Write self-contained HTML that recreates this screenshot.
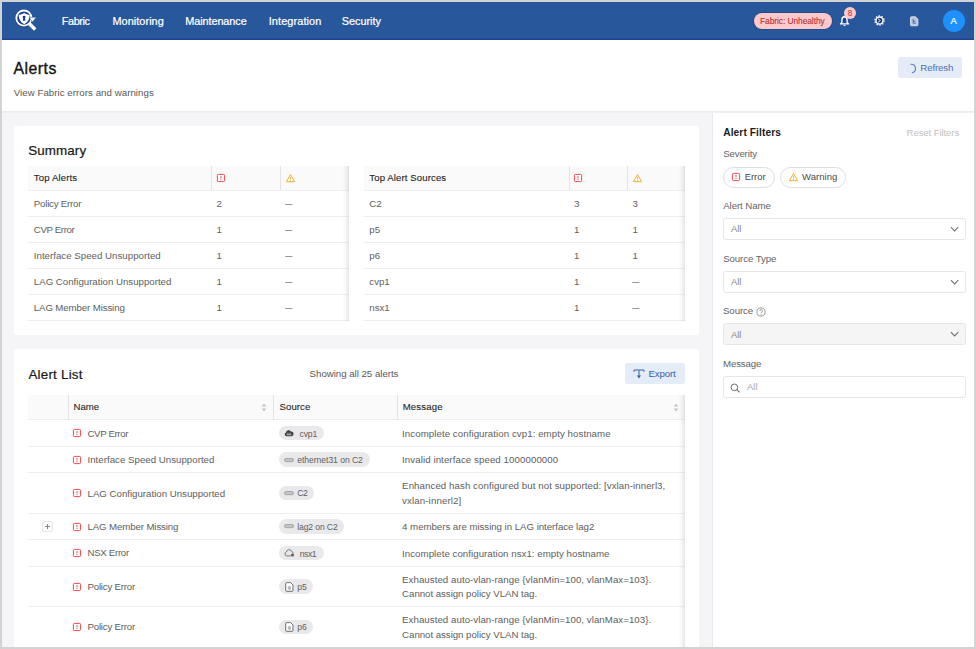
<!DOCTYPE html>
<html lang="en">
<head>
<meta charset="utf-8">
<title>Alerts</title>
<style>
*{box-sizing:border-box;margin:0;padding:0}
html,body{width:976px;height:649px;overflow:hidden;background:#d3d3d3}
body{font-family:"Liberation Sans",sans-serif;font-size:9.75px;color:#595959;position:relative}
#frame{position:absolute;left:2px;top:2px;width:972px;height:645px;background:#f5f5f7;overflow:hidden}
#pg{position:absolute;left:-2px;top:-2px;width:976px;height:649px}
.t{position:absolute;white-space:nowrap}
.ic{position:absolute;display:block;overflow:visible}
.bx{position:absolute}
.md{-webkit-text-stroke:.22px currentColor}
.h1{-webkit-text-stroke:.36px currentColor}
.lt{-webkit-text-stroke:.1px currentColor}
.sb{-webkit-text-stroke:.45px currentColor}
.hl{position:absolute;height:1px;background:#efeff1}
.vl{position:absolute;width:1px;background:#e3e3e7}
.tag{position:absolute;height:14.5px;border-radius:8px;background:#e9e9eb}
.sel{position:absolute;left:723px;width:243px;height:22px;border:1px solid #e6e6e8;border-radius:2.5px;background:#fff}
.chip{position:absolute;height:21px;border:1px solid #dedee0;border-radius:11px;background:#fff}
</style>
</head>
<body>
<div id="frame"><div id="pg">

<div class="bx" style="left:2px;top:2px;width:972px;height:38px;background:#28579c"></div>
<div class="bx" style="left:2px;top:38px;width:972px;height:1px;background:#224d97"></div>
<div class="bx" style="left:2px;top:39px;width:972px;height:1px;background:#1a4090"></div>
<svg class="ic" style="left:12px;top:6px" width="28" height="28" viewBox="0 0 28 28">
<circle cx="11.9" cy="12.1" r="8.9" fill="none" stroke="#1f4797" stroke-width=".9"/>
<circle cx="11.9" cy="12.1" r="7.6" fill="#1d4193" stroke="#fff" stroke-width="1.8"/>
<path d="M17.2 17.5 L23.2 23.5" stroke="#fff" stroke-width="3.3" stroke-linecap="butt"/>
<path d="M12.2 6.9 C14 8.1 15.8 8.6 17.7 8.7 C17.8 12.8 16 16.2 12.2 18.3 C8.4 16.2 6.6 12.8 6.7 8.7 C8.6 8.6 10.4 8.1 12.2 6.9 Z" fill="#fff"/>
<circle cx="12.1" cy="11.1" r="1.45" fill="#1b3a8c"/>
<path d="M11.35 11.6 h1.5 l0.55 3.1 h-2.6 z" fill="#1b3a8c"/>
<path d="M17.1 11.3 H24.2 L20.6 16 Z" fill="#fff" stroke="#24509a" stroke-width=".5" stroke-linejoin="round"/>
</svg>
<div class="t md" style="left:61.70px;top:13.22px;font-size:10.9px;line-height:16px;color:#fff;letter-spacing:-0.382px;">Fabric</div>
<div class="t md" style="left:112.50px;top:13.22px;font-size:10.9px;line-height:16px;color:#fff;letter-spacing:0.045px;">Monitoring</div>
<div class="t md" style="left:185.20px;top:13.22px;font-size:10.9px;line-height:16px;color:#fff;letter-spacing:-0.080px;">Maintenance</div>
<div class="t md" style="left:268.70px;top:13.22px;font-size:10.9px;line-height:16px;color:#fff;letter-spacing:0.119px;">Integration</div>
<div class="t md" style="left:341.80px;top:13.22px;font-size:10.9px;line-height:16px;color:#fff;letter-spacing:-0.042px;">Security</div>
<div class="bx" style="left:754px;top:13px;width:77.5px;height:15.5px;border-radius:8px;background:#ffc9c9;box-shadow:0 0 0 1px #204a92"></div>
<div class="t lt" style="left:760.00px;top:15.19px;font-size:8.4px;line-height:12px;color:#b0303a;letter-spacing:-0.059px;">Fabric: Unhealthy</div>
<svg class="ic" style="left:839.4px;top:15px" width="11" height="12" viewBox="0 0 11 12">
<path d="M5.5 1.7 C3.6 1.7 2.9 3.2 2.9 5 V7.4 L1.5 8.9 H9.5 L8.1 7.4 V5 C8.1 3.2 7.4 1.7 5.5 1.7 Z" fill="#1f4697" stroke="#fff" stroke-width="1.35" stroke-linejoin="round"/>
<path d="M4.4 10.1 a1.1 1.1 0 0 0 2.2 0 z" fill="#fff"/><path d="M5.5 .7v1" stroke="#fff" stroke-width="1.1"/>
</svg>
<div class="bx" style="left:843.5px;top:6.7px;width:12.8px;height:12.8px;border-radius:50%;background:#ffc9c9"></div>
<div class="t" style="left:847.70px;top:8.16px;font-size:8.2px;line-height:12px;color:#b5343c;">8</div>
<svg class="ic" style="left:874.3px;top:15.3px" width="11" height="11" viewBox="0 0 12 12">
<circle cx="6" cy="6" r="5.1" fill="none" stroke="#fff" stroke-width="1.3" stroke-dasharray="1.5 1.7"/>
<circle cx="6" cy="6" r="3.85" fill="#1b3a8c" stroke="#fff" stroke-width="1.55"/>
<path d="M4.4 4.1 L6.9 6 L4.4 7.9" fill="none" stroke="#fff" stroke-width=".9" stroke-linejoin="round"/>
</svg>
<svg class="ic" style="left:909.6px;top:15.6px" width="8.8" height="10.6" viewBox="0 0 10 12">
<path d="M1.6 .8 H6.2 L9 3.6 V10 a1.1 1.1 0 0 1 -1.1 1.1 H1.6 a1.1 1.1 0 0 1 -1.1 -1.1 V1.9 a1.1 1.1 0 0 1 1.1 -1.1 Z" fill="#bcc8df" stroke="#dfe5f0" stroke-width=".9"/>
<path d="M3.6 3.2 V8.2 H6.8 M3.6 5.8 H6.4" fill="none" stroke="#28579c" stroke-width=".9"/>
</svg>
<div class="bx" style="left:942.7px;top:9.7px;width:22px;height:22px;border-radius:50%;background:#1e90ff"></div>
<div class="t md" style="left:950.50px;top:14.74px;font-size:9.4px;line-height:12px;color:#fff;">A</div>
<div class="bx" style="left:2px;top:40px;width:972px;height:71px;background:#fff"></div>
<div class="bx" style="left:2px;top:111px;width:972px;height:1px;background:#ececef"></div>
<div class="bx" style="left:2px;top:112px;width:972px;height:1px;background:#efeff2"></div>
<div class="t h1" style="left:13.40px;top:57.93px;font-size:15.8px;line-height:22px;color:#141414;letter-spacing:0.504px;">Alerts</div>
<div class="t" style="left:13.70px;top:85.94px;font-size:9.7px;line-height:14px;color:#595959;letter-spacing:0.044px;">View Fabric errors and warnings</div>
<div class="bx" style="left:897.7px;top:56.8px;width:64px;height:21px;border-radius:2.5px;background:#e6ecf7"></div>
<svg class="ic" style="left:905.7px;top:62.6px" width="11" height="11" viewBox="0 0 11 11">
<circle cx="5.5" cy="5.5" r="4.3" fill="none" stroke="#e0e7f4" stroke-width="1"/>
<path d="M5 1.25 A4.3 4.3 0 0 1 6.3 9.7" fill="none" stroke="#5a7cc0" stroke-width="1.1" stroke-linecap="round"/>
</svg>
<div class="t" style="left:920.30px;top:61.24px;font-size:9.7px;line-height:14px;color:#4b70b6;letter-spacing:-0.139px;">Refresh</div>
<div class="bx" style="left:713px;top:113px;width:261px;height:536px;background:#fff"></div>
<div class="bx" style="left:712px;top:113px;width:1px;height:536px;background:#e9e9ec"></div>
<div class="t" style="left:723.20px;top:125.57px;font-size:10.2px;line-height:14px;color:#1c1c1c;font-weight:bold;letter-spacing:0.096px;">Alert Filters</div>
<div class="t" style="left:906.60px;top:125.57px;font-size:9.6px;line-height:14px;color:#c2c2c2;letter-spacing:-0.104px;">Reset Filters</div>
<div class="t" style="left:723.20px;top:146.64px;font-size:9.7px;line-height:14px;color:#636363;letter-spacing:-0.164px;">Severity</div>
<div class="chip" style="left:722.8px;top:166.5px;width:52px"></div>
<svg class="ic" width="10" height="10" viewBox="0 0 10 10" style="left:730.80px;top:171.90px"><rect x="1.4" y="1.4" width="7.2" height="7.2" rx="1.15" fill="#fff" stroke="#f2464b" stroke-width="1"/><path d="M5 3.1v2.3" stroke="#f2464b" stroke-width="1" stroke-linecap="butt"/><rect x="4.5" y="6.1" width="1" height="1" fill="#f2464b"/></svg>
<div class="t" style="left:744.70px;top:170.01px;font-size:9.5px;line-height:14px;color:#4a4a4a;letter-spacing:-0.062px;">Error</div>
<div class="chip" style="left:780.1px;top:166.5px;width:66px"></div>
<svg class="ic" width="11" height="10" viewBox="0 0 11 10" style="left:787.80px;top:172.10px"><path d="M5.5 1.6 L9.6 8.7 H1.4 Z" fill="none" stroke="#f2b233" stroke-width="1" stroke-linejoin="round"/><path d="M5.5 4.2v2.2" stroke="#f2b233" stroke-width=".9"/><rect x="5.05" y="7" width=".9" height=".9" fill="#f2b233"/></svg>
<div class="t" style="left:802.10px;top:170.01px;font-size:9.5px;line-height:14px;color:#4a4a4a;letter-spacing:0.044px;">Warning</div>
<div class="t" style="left:723.20px;top:199.24px;font-size:9.7px;line-height:14px;color:#636363;letter-spacing:-0.085px;">Alert Name</div>
<div class="sel" style="top:218px"></div>
<div class="t" style="left:730.90px;top:222.31px;font-size:9.5px;line-height:14px;color:#8a8a8a;letter-spacing:-0.074px;">All</div>
<svg class="ic" style="left:949.7px;top:225.9px" width="9.2" height="6.4" viewBox="0 0 10 7"><path d="M1 1.3 L5 5.4 L9 1.3" fill="none" stroke="#6e6e6e" stroke-width="1.1"/></svg>
<div class="t" style="left:723.20px;top:251.74px;font-size:9.7px;line-height:14px;color:#636363;letter-spacing:-0.100px;">Source Type</div>
<div class="sel" style="top:271px"></div>
<div class="t" style="left:730.90px;top:274.71px;font-size:9.5px;line-height:14px;color:#8a8a8a;letter-spacing:-0.074px;">All</div>
<svg class="ic" style="left:949.7px;top:278.6px" width="9.2" height="6.4" viewBox="0 0 10 7"><path d="M1 1.3 L5 5.4 L9 1.3" fill="none" stroke="#6e6e6e" stroke-width="1.1"/></svg>
<div class="t" style="left:723.00px;top:304.24px;font-size:9.7px;line-height:14px;color:#636363;letter-spacing:-0.101px;">Source</div>
<svg class="ic" style="left:755.6px;top:306.5px" width="10" height="10" viewBox="0 0 10 10">
<circle cx="5" cy="5" r="4.1" fill="none" stroke="#8a8a8a" stroke-width=".85"/>
<path d="M3.7 4 a1.35 1.35 0 1 1 1.9 1.2 c-.4 .2 -.55 .45 -.55 .9" fill="none" stroke="#8a8a8a" stroke-width=".85"/><rect x="4.55" y="6.9" width=".9" height=".9" fill="#8a8a8a"/>
</svg>
<div class="sel" style="top:323px;background:#f5f5f5"></div>
<div class="t" style="left:730.90px;top:327.51px;font-size:9.5px;line-height:14px;color:#8a8a8a;letter-spacing:-0.074px;">All</div>
<svg class="ic" style="left:949.7px;top:331.1px" width="9.2" height="6.4" viewBox="0 0 10 7"><path d="M1 1.3 L5 5.4 L9 1.3" fill="none" stroke="#6e6e6e" stroke-width="1.1"/></svg>
<div class="t" style="left:723.00px;top:356.94px;font-size:9.7px;line-height:14px;color:#636363;letter-spacing:-0.153px;">Message</div>
<div class="sel" style="top:376px"></div>
<svg class="ic" style="left:730.2px;top:382.8px" width="11" height="10" viewBox="0 0 11 10">
<circle cx="4.4" cy="4.3" r="3.3" fill="none" stroke="#6b6b6b" stroke-width="1"/><path d="M6.8 6.7 L9.6 9.4" stroke="#6b6b6b" stroke-width="1.1"/>
</svg>
<div class="t" style="left:747.10px;top:379.91px;font-size:9.5px;line-height:14px;color:#a8a8a8;letter-spacing:-0.074px;">All</div>
<div class="bx" style="left:14px;top:126px;width:685px;height:209px;border-radius:3px;background:#fff"></div>
<div class="t md" style="left:28.20px;top:141.96px;font-size:13.4px;line-height:18px;color:#1a1a1a;letter-spacing:0.101px;">Summary</div>
<div class="bx" style="left:28px;top:166px;width:321px;height:25px;background:#fafafa;border-radius:2px 2px 0 0"></div>
<div class="hl" style="left:28px;top:190px;width:321px"></div>
<div class="hl" style="left:28px;top:216px;width:321px"></div>
<div class="hl" style="left:28px;top:242px;width:321px"></div>
<div class="hl" style="left:28px;top:268px;width:321px"></div>
<div class="hl" style="left:28px;top:294px;width:321px"></div>
<div class="hl" style="left:28px;top:320px;width:321px"></div>
<div class="vl" style="left:211px;top:166px;height:24px"></div>
<div class="vl" style="left:280px;top:166px;height:24px"></div>
<div class="t lt" style="left:33.80px;top:170.97px;font-size:9.6px;line-height:14px;color:#262626;letter-spacing:0.138px;">Top Alerts</div>
<svg class="ic" width="10" height="10" viewBox="0 0 10 10" style="left:215.60px;top:173.10px"><rect x="1.4" y="1.4" width="7.2" height="7.2" rx="1.15" fill="#fff" stroke="#f2464b" stroke-width="1"/><path d="M5 3.1v2.3" stroke="#f2464b" stroke-width="1" stroke-linecap="butt"/><rect x="4.5" y="6.1" width="1" height="1" fill="#f2464b"/></svg>
<svg class="ic" width="11" height="10" viewBox="0 0 11 10" style="left:284.70px;top:173.30px"><path d="M5.5 1.6 L9.6 8.7 H1.4 Z" fill="none" stroke="#f2b233" stroke-width="1" stroke-linejoin="round"/><path d="M5.5 4.2v2.2" stroke="#f2b233" stroke-width=".9"/><rect x="5.05" y="7" width=".9" height=".9" fill="#f2b233"/></svg>
<div class="t" style="left:33.80px;top:196.44px;font-size:9.7px;line-height:15px;color:#5e5e5e;letter-spacing:-0.212px;">Policy Error</div>
<div class="t" style="left:216.60px;top:196.44px;font-size:9.7px;line-height:15px;color:#5e5e5e;">2</div>
<div class="t" style="left:285.40px;top:196.44px;font-size:9.7px;line-height:15px;color:#6a6a6a;transform:scaleX(.76);transform-origin:0 50%;">—</div>
<div class="t" style="left:33.80px;top:222.44px;font-size:9.7px;line-height:15px;color:#5e5e5e;letter-spacing:-0.376px;">CVP Error</div>
<div class="t" style="left:216.60px;top:222.44px;font-size:9.7px;line-height:15px;color:#5e5e5e;">1</div>
<div class="t" style="left:285.40px;top:222.44px;font-size:9.7px;line-height:15px;color:#6a6a6a;transform:scaleX(.76);transform-origin:0 50%;">—</div>
<div class="t" style="left:33.80px;top:248.44px;font-size:9.7px;line-height:15px;color:#5e5e5e;letter-spacing:0.013px;">Interface Speed Unsupported</div>
<div class="t" style="left:216.60px;top:248.44px;font-size:9.7px;line-height:15px;color:#5e5e5e;">1</div>
<div class="t" style="left:285.40px;top:248.44px;font-size:9.7px;line-height:15px;color:#6a6a6a;transform:scaleX(.76);transform-origin:0 50%;">—</div>
<div class="t" style="left:33.80px;top:274.44px;font-size:9.7px;line-height:15px;color:#5e5e5e;letter-spacing:-0.010px;">LAG Configuration Unsupported</div>
<div class="t" style="left:216.60px;top:274.44px;font-size:9.7px;line-height:15px;color:#5e5e5e;">1</div>
<div class="t" style="left:285.40px;top:274.44px;font-size:9.7px;line-height:15px;color:#6a6a6a;transform:scaleX(.76);transform-origin:0 50%;">—</div>
<div class="t" style="left:33.80px;top:300.44px;font-size:9.7px;line-height:15px;color:#5e5e5e;letter-spacing:-0.126px;">LAG Member Missing</div>
<div class="t" style="left:216.60px;top:300.44px;font-size:9.7px;line-height:15px;color:#5e5e5e;">1</div>
<div class="t" style="left:285.40px;top:300.44px;font-size:9.7px;line-height:15px;color:#6a6a6a;transform:scaleX(.76);transform-origin:0 50%;">—</div>
<div class="bx" style="left:342px;top:166px;width:7px;height:155px;background:linear-gradient(to right,rgba(0,0,0,0),rgba(0,0,0,.025) 45%,rgba(0,0,0,.10))"></div>
<div class="bx" style="left:363.5px;top:166px;width:321.0px;height:25px;background:#fafafa;border-radius:2px 2px 0 0"></div>
<div class="hl" style="left:363.5px;top:190px;width:321.0px"></div>
<div class="hl" style="left:363.5px;top:216px;width:321.0px"></div>
<div class="hl" style="left:363.5px;top:242px;width:321.0px"></div>
<div class="hl" style="left:363.5px;top:268px;width:321.0px"></div>
<div class="hl" style="left:363.5px;top:294px;width:321.0px"></div>
<div class="hl" style="left:363.5px;top:320px;width:321.0px"></div>
<div class="vl" style="left:568.5px;top:166px;height:24px"></div>
<div class="vl" style="left:627px;top:166px;height:24px"></div>
<div class="t lt" style="left:369.30px;top:170.97px;font-size:9.6px;line-height:14px;color:#262626;letter-spacing:0.105px;">Top Alert Sources</div>
<svg class="ic" width="10" height="10" viewBox="0 0 10 10" style="left:573.10px;top:173.10px"><rect x="1.4" y="1.4" width="7.2" height="7.2" rx="1.15" fill="#fff" stroke="#f2464b" stroke-width="1"/><path d="M5 3.1v2.3" stroke="#f2464b" stroke-width="1" stroke-linecap="butt"/><rect x="4.5" y="6.1" width="1" height="1" fill="#f2464b"/></svg>
<svg class="ic" width="11" height="10" viewBox="0 0 11 10" style="left:631.70px;top:173.30px"><path d="M5.5 1.6 L9.6 8.7 H1.4 Z" fill="none" stroke="#f2b233" stroke-width="1" stroke-linejoin="round"/><path d="M5.5 4.2v2.2" stroke="#f2b233" stroke-width=".9"/><rect x="5.05" y="7" width=".9" height=".9" fill="#f2b233"/></svg>
<div class="t" style="left:369.30px;top:196.44px;font-size:9.7px;line-height:15px;color:#5e5e5e;">C2</div>
<div class="t" style="left:574.10px;top:196.44px;font-size:9.7px;line-height:15px;color:#5e5e5e;">3</div>
<div class="t" style="left:632.60px;top:196.44px;font-size:9.7px;line-height:15px;color:#5e5e5e;">3</div>
<div class="t" style="left:369.30px;top:222.44px;font-size:9.7px;line-height:15px;color:#5e5e5e;">p5</div>
<div class="t" style="left:574.10px;top:222.44px;font-size:9.7px;line-height:15px;color:#5e5e5e;">1</div>
<div class="t" style="left:632.60px;top:222.44px;font-size:9.7px;line-height:15px;color:#5e5e5e;">1</div>
<div class="t" style="left:369.30px;top:248.44px;font-size:9.7px;line-height:15px;color:#5e5e5e;">p6</div>
<div class="t" style="left:574.10px;top:248.44px;font-size:9.7px;line-height:15px;color:#5e5e5e;">1</div>
<div class="t" style="left:632.60px;top:248.44px;font-size:9.7px;line-height:15px;color:#5e5e5e;">1</div>
<div class="t" style="left:369.30px;top:274.44px;font-size:9.7px;line-height:15px;color:#5e5e5e;">cvp1</div>
<div class="t" style="left:574.10px;top:274.44px;font-size:9.7px;line-height:15px;color:#5e5e5e;">1</div>
<div class="t" style="left:632.40px;top:274.44px;font-size:9.7px;line-height:15px;color:#6a6a6a;transform:scaleX(.76);transform-origin:0 50%;">—</div>
<div class="t" style="left:369.30px;top:300.44px;font-size:9.7px;line-height:15px;color:#5e5e5e;">nsx1</div>
<div class="t" style="left:574.10px;top:300.44px;font-size:9.7px;line-height:15px;color:#5e5e5e;">1</div>
<div class="t" style="left:632.40px;top:300.44px;font-size:9.7px;line-height:15px;color:#6a6a6a;transform:scaleX(.76);transform-origin:0 50%;">—</div>
<div class="bx" style="left:677.5px;top:166px;width:7px;height:155px;background:linear-gradient(to right,rgba(0,0,0,0),rgba(0,0,0,.025) 45%,rgba(0,0,0,.10))"></div>
<div class="bx" style="left:14px;top:349px;width:685px;height:310px;border-radius:3px;background:#fff"></div>
<div class="t md" style="left:28.40px;top:366.06px;font-size:13.4px;line-height:18px;color:#1a1a1a;letter-spacing:0.225px;">Alert List</div>
<div class="t" style="left:309.60px;top:366.64px;font-size:9.7px;line-height:14px;color:#595959;letter-spacing:-0.027px;">Showing all 25 alerts</div>
<div class="bx" style="left:625.2px;top:363.2px;width:59.4px;height:21.2px;border-radius:2.5px;background:#e4ecf8"></div>
<svg class="ic" style="left:632.8px;top:369.2px" width="12" height="11" viewBox="0 0 12 11">
<path d="M1 2.8 V1 H11 V2.8" fill="none" stroke="#3560ad" stroke-width="1"/>
<path d="M6 1.5 V8.6" stroke="#3560ad" stroke-width="1"/><path d="M3.9 6.4 L6 9.2 L8.1 6.4 Z" fill="#3560ad"/>
</svg>
<div class="t" style="left:648.50px;top:366.94px;font-size:9.7px;line-height:14px;color:#3560ad;letter-spacing:-0.161px;">Export</div>
<div class="bx" style="left:28px;top:394.5px;width:656.5px;height:25.5px;background:#fafafa;border-radius:2px 2px 0 0"></div>
<div class="hl" style="left:28px;top:419px;width:656.5px"></div>
<div class="hl" style="left:28px;top:446px;width:656.5px"></div>
<div class="hl" style="left:28px;top:472px;width:656.5px"></div>
<div class="hl" style="left:28px;top:512.5px;width:656.5px"></div>
<div class="hl" style="left:28px;top:539px;width:656.5px"></div>
<div class="hl" style="left:28px;top:565.6px;width:656.5px"></div>
<div class="hl" style="left:28px;top:606px;width:656.5px"></div>
<div class="vl" style="left:67.5px;top:394.5px;height:25px"></div>
<div class="vl" style="left:273.3px;top:394.5px;height:25px"></div>
<div class="vl" style="left:397px;top:394.5px;height:25px"></div>
<div class="t lt" style="left:73.60px;top:400.07px;font-size:9.6px;line-height:14px;color:#262626;letter-spacing:-0.019px;">Name</div>
<div class="t lt" style="left:279.50px;top:400.07px;font-size:9.6px;line-height:14px;color:#262626;letter-spacing:0.088px;">Source</div>
<div class="t lt" style="left:402.70px;top:400.07px;font-size:9.6px;line-height:14px;color:#262626;letter-spacing:0.168px;">Message</div>
<svg class="ic" style="left:261.4px;top:403.2px" width="6" height="9" viewBox="0 0 6 9"><path d="M3 .6 L5.3 3.5 H.7 Z M3 8.4 L5.3 5.5 H.7 Z" fill="#c4c4c4"/></svg>
<svg class="ic" style="left:672.7px;top:403.2px" width="6" height="9" viewBox="0 0 6 9"><path d="M3 .6 L5.3 3.5 H.7 Z M3 8.4 L5.3 5.5 H.7 Z" fill="#c4c4c4"/></svg>
<svg class="ic" width="10" height="10" viewBox="0 0 10 10" style="left:71.80px;top:428.30px"><rect x="1.4" y="1.4" width="7.2" height="7.2" rx="1.15" fill="#fff" stroke="#f2464b" stroke-width="1"/><path d="M5 3.1v2.3" stroke="#f2464b" stroke-width="1" stroke-linecap="butt"/><rect x="4.5" y="6.1" width="1" height="1" fill="#f2464b"/></svg>
<div class="t" style="left:87.50px;top:425.74px;font-size:9.7px;line-height:15px;color:#5e5e5e;letter-spacing:-0.376px;">CVP Error</div>
<div class="tag" style="left:278.7px;top:425.9px;width:45.3px"></div>
<svg class="ic" style="left:284.2px;top:430.0px" width="10" height="7" viewBox="0 0 10 7"><path d="M2.4 6.2 a1.9 1.9 0 0 1 -.3 -3.7 a2.5 2.5 0 0 1 4.7 -.9 a2.2 2.2 0 0 1 .9 4.6 Z" fill="#3f3f3f"/><path d="M2.2 4.3 h5.6 M4 2.6 v3.2 M6 2.6 v3.2" stroke="#e9e9eb" stroke-width=".5"/></svg>
<div class="t" style="left:299.50px;top:427.52px;font-size:8.6px;line-height:13px;color:#606060;letter-spacing:-0.158px;">cvp1</div>
<div class="t" style="left:402.10px;top:425.74px;font-size:9.7px;line-height:15px;color:#5e5e5e;letter-spacing:0.063px;">Incomplete configuration cvp1: empty hostname</div>
<svg class="ic" width="10" height="10" viewBox="0 0 10 10" style="left:71.80px;top:454.70px"><rect x="1.4" y="1.4" width="7.2" height="7.2" rx="1.15" fill="#fff" stroke="#f2464b" stroke-width="1"/><path d="M5 3.1v2.3" stroke="#f2464b" stroke-width="1" stroke-linecap="butt"/><rect x="4.5" y="6.1" width="1" height="1" fill="#f2464b"/></svg>
<div class="t" style="left:87.50px;top:452.14px;font-size:9.7px;line-height:15px;color:#5e5e5e;letter-spacing:0.013px;">Interface Speed Unsupported</div>
<div class="tag" style="left:278.7px;top:452.3px;width:91.2px"></div>
<svg class="ic" style="left:284.4px;top:457.5px" width="10" height="5" viewBox="0 0 10 5"><rect x=".5" y=".5" width="9" height="3.2" rx="1.5" fill="#c6c6c8" stroke="#a2a2a4" stroke-width=".9"/></svg>
<div class="t" style="left:297.30px;top:453.92px;font-size:8.6px;line-height:13px;color:#606060;letter-spacing:-0.056px;">ethernet31 on C2</div>
<div class="t" style="left:402.10px;top:452.14px;font-size:9.7px;line-height:15px;color:#5e5e5e;letter-spacing:0.078px;">Invalid interface speed 1000000000</div>
<svg class="ic" width="10" height="10" viewBox="0 0 10 10" style="left:71.80px;top:488.20px"><rect x="1.4" y="1.4" width="7.2" height="7.2" rx="1.15" fill="#fff" stroke="#f2464b" stroke-width="1"/><path d="M5 3.1v2.3" stroke="#f2464b" stroke-width="1" stroke-linecap="butt"/><rect x="4.5" y="6.1" width="1" height="1" fill="#f2464b"/></svg>
<div class="t" style="left:87.50px;top:485.64px;font-size:9.7px;line-height:15px;color:#5e5e5e;letter-spacing:-0.010px;">LAG Configuration Unsupported</div>
<div class="tag" style="left:278.7px;top:485.8px;width:35.1px"></div>
<svg class="ic" style="left:284.4px;top:491.0px" width="10" height="5" viewBox="0 0 10 5"><rect x=".5" y=".5" width="9" height="3.2" rx="1.5" fill="#c6c6c8" stroke="#a2a2a4" stroke-width=".9"/></svg>
<div class="t" style="left:297.30px;top:487.42px;font-size:8.6px;line-height:13px;color:#606060;letter-spacing:-0.600px;">C2</div>
<div class="t" style="left:402.10px;top:478.24px;font-size:9.7px;line-height:15px;color:#5e5e5e;letter-spacing:0.071px;">Enhanced hash configured but not supported: [vxlan-innerl3,</div>
<div class="t" style="left:402.10px;top:493.04px;font-size:9.7px;line-height:15px;color:#5e5e5e;letter-spacing:0.114px;">vxlan-innerl2]</div>
<svg class="ic" width="10" height="10" viewBox="0 0 10 10" style="left:71.80px;top:521.60px"><rect x="1.4" y="1.4" width="7.2" height="7.2" rx="1.15" fill="#fff" stroke="#f2464b" stroke-width="1"/><path d="M5 3.1v2.3" stroke="#f2464b" stroke-width="1" stroke-linecap="butt"/><rect x="4.5" y="6.1" width="1" height="1" fill="#f2464b"/></svg>
<div class="t" style="left:87.50px;top:519.04px;font-size:9.7px;line-height:15px;color:#5e5e5e;letter-spacing:-0.126px;">LAG Member Missing</div>
<div class="tag" style="left:278.7px;top:519.2px;width:65.5px"></div>
<svg class="ic" style="left:284.4px;top:524.4px" width="10" height="5" viewBox="0 0 10 5"><rect x=".5" y=".5" width="9" height="3.2" rx="1.5" fill="#c6c6c8" stroke="#a2a2a4" stroke-width=".9"/></svg>
<div class="t" style="left:297.20px;top:520.82px;font-size:8.6px;line-height:13px;color:#606060;letter-spacing:-0.121px;">lag2 on C2</div>
<div class="t" style="left:402.10px;top:519.04px;font-size:9.7px;line-height:15px;color:#5e5e5e;letter-spacing:-0.039px;">4 members are missing in LAG interface lag2</div>
<svg class="ic" width="10" height="10" viewBox="0 0 10 10" style="left:71.80px;top:548.30px"><rect x="1.4" y="1.4" width="7.2" height="7.2" rx="1.15" fill="#fff" stroke="#f2464b" stroke-width="1"/><path d="M5 3.1v2.3" stroke="#f2464b" stroke-width="1" stroke-linecap="butt"/><rect x="4.5" y="6.1" width="1" height="1" fill="#f2464b"/></svg>
<div class="t" style="left:87.50px;top:544.94px;font-size:9.7px;line-height:15px;color:#5e5e5e;letter-spacing:-0.314px;">NSX Error</div>
<div class="tag" style="left:278.7px;top:545.9px;width:45.0px"></div>
<svg class="ic" style="left:284px;top:549.4px" width="11" height="8" viewBox="0 0 11 8"><path d="M6.4 6.9 H2.7 a2 2 0 0 1 -.3 -3.9 a2.7 2.7 0 0 1 5.2 -.6 a2.1 2.1 0 0 1 1.6 1.7" fill="none" stroke="#6a6a6a" stroke-width=".9" stroke-linecap="round"/><circle cx="8.5" cy="6.1" r="1.5" fill="#5a5a5a"/></svg>
<div class="t" style="left:299.70px;top:547.52px;font-size:8.6px;line-height:13px;color:#606060;letter-spacing:-0.424px;">nsx1</div>
<div class="t" style="left:402.10px;top:545.74px;font-size:9.7px;line-height:15px;color:#5e5e5e;letter-spacing:0.036px;">Incomplete configuration nsx1: empty hostname</div>
<svg class="ic" width="10" height="10" viewBox="0 0 10 10" style="left:71.80px;top:581.60px"><rect x="1.4" y="1.4" width="7.2" height="7.2" rx="1.15" fill="#fff" stroke="#f2464b" stroke-width="1"/><path d="M5 3.1v2.3" stroke="#f2464b" stroke-width="1" stroke-linecap="butt"/><rect x="4.5" y="6.1" width="1" height="1" fill="#f2464b"/></svg>
<div class="t" style="left:87.50px;top:579.04px;font-size:9.7px;line-height:15px;color:#5e5e5e;letter-spacing:-0.212px;">Policy Error</div>
<div class="tag" style="left:278.7px;top:579.2px;width:34.6px"></div>
<svg class="ic" style="left:284.9px;top:581.6px" width="9" height="10" viewBox="0 0 9 10"><path d="M1.7 .6 H5.6 L8 3 V8.3 a1 1 0 0 1 -1 1 H1.7 a1 1 0 0 1 -1 -1 V1.6 a1 1 0 0 1 1 -1 Z" fill="#fff" stroke="#5f5f5f" stroke-width=".9"/><path d="M2.8 5 H5.9 M2.8 6.9 H5.9" stroke="#5f5f5f" stroke-width=".8"/></svg>
<div class="t" style="left:297.20px;top:580.82px;font-size:8.6px;line-height:13px;color:#606060;letter-spacing:-0.079px;">p5</div>
<div class="t" style="left:402.10px;top:571.64px;font-size:9.7px;line-height:15px;color:#5e5e5e;letter-spacing:0.047px;">Exhausted auto-vlan-range {vlanMin=100, vlanMax=103}.</div>
<div class="t" style="left:402.10px;top:586.44px;font-size:9.7px;line-height:15px;color:#5e5e5e;letter-spacing:-0.043px;">Cannot assign policy VLAN tag.</div>
<svg class="ic" width="10" height="10" viewBox="0 0 10 10" style="left:71.80px;top:622.10px"><rect x="1.4" y="1.4" width="7.2" height="7.2" rx="1.15" fill="#fff" stroke="#f2464b" stroke-width="1"/><path d="M5 3.1v2.3" stroke="#f2464b" stroke-width="1" stroke-linecap="butt"/><rect x="4.5" y="6.1" width="1" height="1" fill="#f2464b"/></svg>
<div class="t" style="left:87.50px;top:618.84px;font-size:9.7px;line-height:15px;color:#5e5e5e;letter-spacing:-0.212px;">Policy Error</div>
<div class="tag" style="left:278.7px;top:619.7px;width:34.6px"></div>
<svg class="ic" style="left:284.9px;top:622.1px" width="9" height="10" viewBox="0 0 9 10"><path d="M1.7 .6 H5.6 L8 3 V8.3 a1 1 0 0 1 -1 1 H1.7 a1 1 0 0 1 -1 -1 V1.6 a1 1 0 0 1 1 -1 Z" fill="#fff" stroke="#5f5f5f" stroke-width=".9"/><path d="M2.8 5 H5.9 M2.8 6.9 H5.9" stroke="#5f5f5f" stroke-width=".8"/></svg>
<div class="t" style="left:297.20px;top:621.32px;font-size:8.6px;line-height:13px;color:#606060;letter-spacing:-0.079px;">p6</div>
<div class="t" style="left:402.10px;top:612.14px;font-size:9.7px;line-height:15px;color:#5e5e5e;letter-spacing:0.047px;">Exhausted auto-vlan-range {vlanMin=100, vlanMax=103}.</div>
<div class="t" style="left:402.10px;top:626.94px;font-size:9.7px;line-height:15px;color:#5e5e5e;letter-spacing:-0.043px;">Cannot assign policy VLAN tag.</div>
<div class="bx" style="left:42.4px;top:521.4px;width:10.4px;height:10.4px;border:1px solid #e6e6e8;border-radius:2px;background:#fff"></div>
<div class="bx" style="left:45px;top:526.1px;width:5.2px;height:1px;background:#858585"></div>
<div class="bx" style="left:47.1px;top:524px;width:1px;height:5.2px;background:#858585"></div>
<div class="bx" style="left:677.5px;top:394.5px;width:7px;height:255px;background:linear-gradient(to right,rgba(0,0,0,0),rgba(0,0,0,.025) 45%,rgba(0,0,0,.10))"></div>
</div></div>
</body>
</html>
